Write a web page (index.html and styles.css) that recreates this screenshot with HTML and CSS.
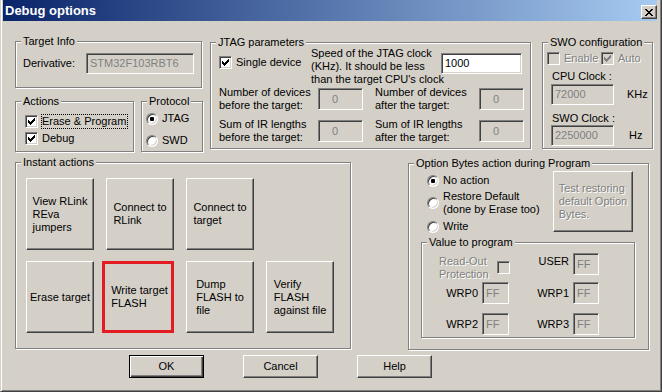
FILE: index.html
```html
<!DOCTYPE html>
<html>

<head>
    <title>Debug options</title>
    <link rel="stylesheet" href="styles.css">
</head>

<body>
    <div class="window">
        <div class="titlebar">
            <span class="title">Debug options</span>
            <span class="close">
                <svg width="8" height="7" viewBox="0 0 8 7"><path d="M0 0h2v1H0zM6 0h2v1H6zM1 1h2v1H1zM5 1h2v1H5zM2 2h4v1H2zM3 3h2v1H3zM2 4h4v1H2zM1 5h2v1H1zM5 5h2v1H5zM0 6h2v1H0zM6 6h2v1H6z"/></svg>
            </span>
        </div>

        <div class="content">
            <!-- top row: target info / actions / protocol, JTAG, SWO -->
            <div class="row">
                <div class="col-left">
                    <div class="group target-info">
                        <span class="legend">Target Info</span>
                        <span class="deriv-label">Derivative:</span>
                        <span class="edit off deriv">STM32F103RBT6</span>
                    </div>
                    <div class="row actions-row">
                        <div class="group actions">
                            <span class="legend">Actions</span>
                            <div class="check">
                                <span class="box"><svg class="tick" width="7" height="7" viewBox="0 0 7 7"><path d="M0 2h1v3H0zM1 3h1v3H1zM2 4h1v3H2zM3 3h1v3H3zM4 2h1v3H4zM5 1h1v3H5zM6 0h1v3H6z"/></svg></span>
                                <span class="text focus">Erase &amp; Program</span>
                            </div>
                            <div class="check">
                                <span class="box"><svg class="tick" width="7" height="7" viewBox="0 0 7 7"><path d="M0 2h1v3H0zM1 3h1v3H1zM2 4h1v3H2zM3 3h1v3H3zM4 2h1v3H4zM5 1h1v3H5zM6 0h1v3H6z"/></svg></span>
                                <span class="text">Debug</span>
                            </div>
                        </div>
                        <div class="group protocol">
                            <span class="legend">Protocol</span>
                            <div class="option"><span class="radio on"></span><span class="text">JTAG</span></div>
                            <div class="option"><span class="radio"></span><span class="text">SWD</span></div>
                        </div>
                    </div>
                </div>

                <div class="group jtag">
                    <span class="legend">JTAG parameters</span>
                    <div class="jtag-top">
                        <div class="check single">
                            <span class="box"><svg class="tick" width="7" height="7" viewBox="0 0 7 7"><path d="M0 2h1v3H0zM1 3h1v3H1zM2 4h1v3H2zM3 3h1v3H3zM4 2h1v3H4zM5 1h1v3H5zM6 0h1v3H6z"/></svg></span>
                            <span class="text">Single device</span>
                        </div>
                        <span class="speed">Speed of the JTAG clock<br>(KHz). It should be less<br>than the target CPU's clock</span>
                        <span class="edit speed-edit">1000</span>
                    </div>
                    <div class="jtag-row">
                        <span class="jlabel">Number of devices<br>before the target:</span>
                        <span class="edit off small">0</span>
                        <span class="jlabel right">Number of devices<br>after the target:</span>
                        <span class="edit off small">0</span>
                    </div>
                    <div class="jtag-row second">
                        <span class="jlabel">Sum of IR lengths<br>before the target:</span>
                        <span class="edit off small">0</span>
                        <span class="jlabel right">Sum of IR lengths<br>after the target:</span>
                        <span class="edit off small">0</span>
                    </div>
                </div>

                <div class="group swo">
                    <span class="legend">SWO configuration</span>
                    <div class="swo-checks">
                        <div class="check off enable">
                            <span class="box"></span>
                            <span class="text dis">Enable</span>
                        </div>
                        <div class="check off">
                            <span class="box"><svg class="tick" width="7" height="7" viewBox="0 0 7 7"><path d="M0 2h1v3H0zM1 3h1v3H1zM2 4h1v3H2zM3 3h1v3H3zM4 2h1v3H4zM5 1h1v3H5zM6 0h1v3H6z"/></svg></span>
                            <span class="text dis">Auto</span>
                        </div>
                    </div>
                    <div class="swo-label">CPU Clock :</div>
                    <div class="swo-row">
                        <span class="edit off clock">72000</span>
                        <span class="unit">KHz</span>
                    </div>
                    <div class="swo-label second">SWO Clock :</div>
                    <div class="swo-row last">
                        <span class="edit off clock">2250000</span>
                        <span class="unit hz">Hz</span>
                    </div>
                </div>
            </div>

            <!-- middle row: instant actions, option bytes -->
            <div class="row mid">
                <div class="group instant">
                    <span class="legend">Instant actions</span>
                    <div class="btn-row">
                        <div class="btn big"><span>View RLink<br>REva<br>jumpers</span></div>
                        <div class="btn big"><span>Connect to<br>RLink</span></div>
                        <div class="btn big"><span>Connect to<br>target</span></div>
                    </div>
                    <div class="btn-row second">
                        <div class="btn big"><span>Erase target</span></div>
                        <div class="btn big marked"><span>Write target<br>FLASH</span></div>
                        <div class="btn big"><span>Dump<br>FLASH to<br>file</span></div>
                        <div class="btn big"><span>Verify<br>FLASH<br>against file</span></div>
                    </div>
                </div>

                <div class="group optbytes">
                    <span class="legend">Option Bytes action during Program</span>
                    <div class="ob-top">
                        <div class="ob-radios">
                            <div class="option"><span class="radio on"></span><span class="text">No action</span></div>
                            <div class="option restore"><span class="radio"></span><span class="text">Restore Default<br>(done by Erase too)</span></div>
                            <div class="option write"><span class="radio"></span><span class="text">Write</span></div>
                        </div>
                        <div class="btn test"><span class="dis">Test restoring<br>default Option<br>Bytes.</span></div>
                    </div>
                    <div class="group value">
                        <span class="legend">Value to program</span>
                        <div class="val-row first">
                            <span class="ro dis">Read-Out<br>Protection</span>
                            <div class="check off ro-check"><span class="box"></span></div>
                            <span class="vlabel user">USER</span>
                            <span class="edit off ff">FF</span>
                        </div>
                        <div class="val-row">
                            <span class="vlabel left">WRP0</span>
                            <span class="edit off ff wide">FF</span>
                            <span class="vlabel">WRP1</span>
                            <span class="edit off ff">FF</span>
                        </div>
                        <div class="val-row last">
                            <span class="vlabel left">WRP2</span>
                            <span class="edit off ff wide">FF</span>
                            <span class="vlabel">WRP3</span>
                            <span class="edit off ff">FF</span>
                        </div>
                    </div>
                </div>
            </div>

            <!-- dialog buttons -->
            <div class="row bottom">
                <div class="btn dlg default">OK</div>
                <div class="btn dlg">Cancel</div>
                <div class="btn dlg">Help</div>
            </div>
        </div>
    </div>
</body>

</html>
```

FILE: styles.css
```css
* {
    box-sizing: border-box;
}
body {
    margin: 0;
    background: #d4d0c8;
    font-family: 'Liberation Sans', Arial, sans-serif;
    font-size: 11px;
    line-height: 13px;
    color: #000;
}

/* window frame */
.window {
    width: 662px;
    height: 392px;
    background: #d4d0c8;
    border: 1px solid;
    border-top: 0;
    border-color: #d4d0c8 #404040 #404040 #d4d0c8;
    box-shadow: inset 1px 0 #fff, inset -1px -1px #808080;
    padding: 0 4px 0 2px;
}
.titlebar {
    height: 21px;
    display: flex;
    align-items: center;
    padding-left: 2px;
    background: linear-gradient(to right, #0a246a, #a6caf0);
    color: #fff;
    font-size: 13px;
    font-weight: bold;
}
.close {
    margin-left: auto;
    align-self: flex-start;
    margin-top: 5px;
    width: 16px;
    height: 14px;
    display: flex;
    align-items: center;
    justify-content: center;
    background: #d4d0c8;
    border: 1px solid;
    border-color: #fff #404040 #404040 #fff;
    box-shadow: inset -1px -1px #808080;
    color: #000;
}
.close svg {
    display: block;
    fill: #000;
}

.content {
    padding: 20px 0 0 12px;
}
.row {
    display: flex;
    align-items: flex-start;
}

/* etched group box */
.group {
    position: relative;
    border: 1px solid #808080;
    box-shadow: 1px 1px 0 #fff, inset 1px 1px 0 #fff;
}
.group .legend {
    position: absolute;
    top: -7px;
    left: 5px;
    padding: 0 2px;
    background: #d4d0c8;
    white-space: nowrap;
}

/* edit boxes */
.edit {
    display: flex;
    align-items: center;
    height: 21px;
    padding: 0 3px;
    background: #fff;
    border: 1px solid;
    border-color: #808080 #fff #fff #808080;
    box-shadow: inset 1px 1px #404040, inset -1px -1px #d4d0c8;
    white-space: nowrap;
    overflow: hidden;
}
.edit.off {
    background: #d4d0c8;
    color: #808080;
}

.dis {
    color: #808080;
    text-shadow: 1px 1px 0 #fff;
}

/* check boxes */
.check {
    display: flex;
    align-items: center;
    height: 15px;
    white-space: nowrap;
}
.check .box {
    width: 13px;
    height: 13px;
    padding: 2px;
    flex: none;
    background: #fff;
    border: 1px solid;
    border-color: #808080 #fff #fff #808080;
    box-shadow: inset 1px 1px #404040, inset -1px -1px #d4d0c8;
}
.check.off .box {
    background: #d4d0c8;
}
.tick {
    display: block;
    fill: #000;
}
.check.off .tick {
    fill: #808080;
}
.check .text {
    margin-left: 3px;
    border: 1px solid transparent;
    padding-right: 1px;
}
.check .text.focus {
    border: 1px dotted #000;
}

/* radio buttons */
.option {
    display: flex;
    align-items: center;
    height: 13px;
    white-space: nowrap;
}
.radio {
    width: 12px;
    height: 12px;
    flex: none;
    border-radius: 50%;
    background: #fff;
    border: 1px solid;
    border-color: #808080 #fff #fff #808080;
    box-shadow: inset 1px 1px #404040, inset -1px -1px #d4d0c8;
    display: flex;
    align-items: center;
    justify-content: center;
}
.radio.on::after {
    content: '';
    width: 4px;
    height: 4px;
    border-radius: 1px;
    background: #000;
}
.option .text {
    margin-left: 4px;
}

/* push buttons */
.btn {
    display: flex;
    align-items: center;
    justify-content: center;
    background: #d4d0c8;
    border: 1px solid;
    border-color: #fff #404040 #404040 #fff;
    box-shadow: inset -1px -1px #808080;
    white-space: nowrap;
    text-align: left;
}

/* target info */
.col-left {
    width: 188px;
}
.target-info {
    width: 187px;
    height: 47px;
    display: flex;
    align-items: flex-start;
    padding: 11px 0 0 7px;
}
.deriv-label {
    width: 63px;
    line-height: 21px;
}
.deriv {
    width: 108px;
}

/* actions / protocol */
.actions-row {
    margin-top: 13px;
}
.actions {
    width: 119px;
    height: 51px;
    padding: 12px 0 0 9px;
}
.actions .check + .check {
    margin-top: 2px;
}
.protocol {
    width: 62px;
    height: 51px;
    margin-left: 7px;
    padding: 10px 0 0 4px;
}
.protocol .option + .option {
    margin-top: 9px;
}

/* JTAG parameters */
.jtag {
    width: 321px;
    height: 107px;
    margin: 1px 0 0 7px;
    padding: 4px 0 0 8px;
}
.jtag-top {
    display: flex;
    align-items: flex-start;
}
.single {
    width: 92px;
    margin-top: 8px;
}
.speed {
    width: 130px;
    white-space: nowrap;
}
.speed-edit {
    width: 81px;
    margin-top: 6px;
}
.jtag-row {
    display: flex;
    align-items: center;
    height: 26px;
}
.jtag-row.second {
    margin-top: 6px;
}
.jlabel {
    width: 99px;
    white-space: nowrap;
}
.jlabel.right {
    width: 104px;
    margin-left: 12px;
}
.edit.small {
    width: 45px;
    height: 22px;
    padding-left: 13px;
}

/* SWO configuration */
.swo {
    width: 111px;
    height: 107px;
    margin: 1px 0 0 11px;
    padding: 8px 0 0 4px;
}
.swo-checks {
    display: flex;
}
.enable {
    width: 54px;
}
.swo-label {
    margin: 4px 0 0 5px;
}
.swo-label.second {
    margin-top: 7px;
}
.swo-row {
    display: flex;
    align-items: center;
    margin: 1px 0 0 4px;
}
.swo-row.last {
    margin-top: 0;
}
.edit.clock {
    width: 63px;
}
.unit {
    margin-left: 13px;
}
.unit.hz {
    margin-left: 15px;
}

/* instant actions */
.mid {
    margin-top: 10px;
}
.instant {
    width: 336px;
    height: 187px;
    padding: 15px 0 0 10px;
}
.btn-row {
    display: flex;
    gap: 12px;
}
.btn-row.second {
    margin-top: 11px;
}
.btn.big {
    width: 68px;
    height: 72px;
}
.btn.marked {
    width: 72px;
    margin-left: -4px;
    border: 3px solid #e31c23;
    box-shadow: none;
    padding-left: 3px;
}

/* option bytes */
.optbytes {
    width: 241px;
    height: 187px;
    margin: 1px 0 0 57px;
}
.ob-top {
    display: flex;
    align-items: flex-start;
    padding: 7px 0 0 18px;
}
.ob-radios {
    width: 126px;
    margin-top: 3px;
}
.option.restore {
    height: 26px;
    margin-top: 3px;
}
.option.write {
    margin-top: 4px;
}
.btn.test {
    width: 80px;
    height: 61px;
}
.value {
    width: 214px;
    height: 96px;
    margin: 9px 0 0 12px;
    padding-top: 10px;
}
.val-row {
    display: flex;
    align-items: center;
    height: 22px;
    margin-top: 1px;
}
.val-row.first {
    align-items: flex-start;
    height: 28px;
    margin-top: 0;
}
.val-row.last {
    margin-top: 9px;
}
.ro {
    width: 75px;
    padding-left: 17px;
    margin-top: 2px;
    white-space: nowrap;
}
.ro-check {
    margin-top: 7px;
}
.vlabel {
    width: 64px;
    padding-right: 4px;
    text-align: right;
}
.vlabel.left {
    width: 60px;
}
.vlabel.user {
    width: 63px;
    margin-top: 2px;
}
.edit.ff {
    width: 26px;
    height: 22px;
}
.edit.ff.wide {
    width: 27px;
}

/* OK / Cancel / Help */
.bottom {
    margin: 5px 0 0 114px;
    gap: 39px;
}
.btn.dlg {
    width: 75px;
    height: 23px;
}
.btn.default {
    border: 1px solid #000;
    box-shadow: inset 1px 1px #fff, inset -1px -1px #404040, inset -2px -2px #808080;
}
```
